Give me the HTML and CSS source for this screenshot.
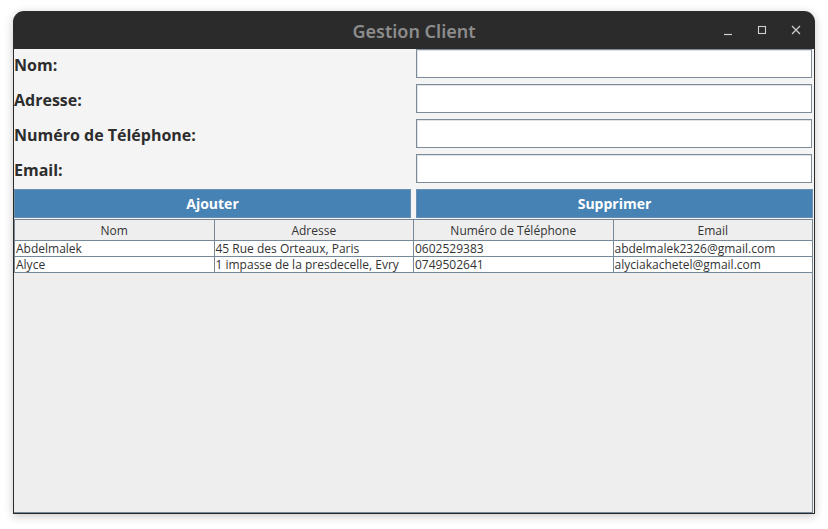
FILE: index.html
```html
<!DOCTYPE html>
<html lang="fr">
<head>
<meta charset="utf-8">
<title>Gestion Client</title>
<link rel="stylesheet" href="styles.css">
</head>
<body>
<div class="window">
  <div class="titlebar">
    <div class="title">Gestion Client</div>
    <div class="controls">
      <svg class="ctl" width="12" height="12" viewBox="0 0 12 12"><path d="M2 10.5h8" stroke="#cfcfcf" stroke-width="1.2"/></svg>
      <svg class="ctl" width="12" height="12" viewBox="0 0 12 12"><rect x="2.5" y="2.5" width="7" height="7" fill="none" stroke="#cfcfcf" stroke-width="1.1"/></svg>
      <svg class="ctl" width="12" height="12" viewBox="0 0 12 12"><path d="M2 2l8 8M10 2l-8 8" stroke="#cfcfcf" stroke-width="1.2"/></svg>
    </div>
  </div>
  <div class="content">
    <div class="form">
      <label class="lbl">Nom:</label><input class="field" type="text">
      <label class="lbl">Adresse:</label><input class="field" type="text">
      <label class="lbl">Numéro de Téléphone:</label><input class="field" type="text">
      <label class="lbl">Email:</label><input class="field" type="text">
      <button class="btn">Ajouter</button><button class="btn">Supprimer</button>
    </div>
    <div class="pane">
      <table class="grid">
        <thead>
          <tr><th>Nom</th><th>Adresse</th><th>Numéro de Téléphone</th><th>Email</th></tr>
        </thead>
        <tbody>
          <tr><td>Abdelmalek</td><td>45 Rue des Orteaux, Paris</td><td>0602529383</td><td>abdelmalek2326@gmail.com</td></tr>
          <tr><td>Alyce</td><td>1 impasse de la presdecelle, Evry</td><td>0749502641</td><td>alyciakachetel@gmail.com</td></tr>
        </tbody>
      </table>
    </div>
  </div>
</div>
</body>
</html>
```
FILE: styles.css
```css
html, body {
  margin: 0;
  padding: 0;
  background: #ffffff;
}
body {
  width: 828px;
  height: 529px;
  overflow: hidden;
}
.window {
  margin: 11px 0 0 13px;
  width: 802px;
  height: 503px;
  background: #2b2b2b;
  border-radius: 11px 11px 0 0;
  box-shadow: 0 2px 10px rgba(0,0,0,0.22);
  display: flex;
  flex-direction: column;
}
.titlebar {
  height: 38px;
  flex: none;
  display: flex;
  align-items: center;
  justify-content: center;
  position: relative;
}
.title {
  font-family: "Noto Sans", "Open Sans", sans-serif;
  font-weight: 600;
  font-size: 18px;
  color: #8c8c8c;
  margin-top: 1px;
}
.controls {
  position: absolute;
  right: 13px;
  top: 13px;
  display: flex;
  gap: 22px;
}
.ctl { display: block; }
.content {
  flex: 1;
  margin: 0 1px 1px 1px;
  background: #f4f4f4;
  display: flex;
  flex-direction: column;
}
.form {
  display: grid;
  grid-template-columns: 397px 397px;
  column-gap: 5px;
  grid-auto-rows: 29px;
  row-gap: 6px;
}
.lbl {
  font-family: "Open Sans", "Noto Sans", sans-serif;
  font-weight: 700;
  font-size: 16px;
  color: #2d2d2d;
  display: flex;
  align-items: center;
  padding-top: 2px;
}
.field {
  margin: 0;
  padding: 0;
  box-sizing: border-box;
  width: 396px;
  height: 29px;
  border: 1px solid #7d8a98;
  box-shadow: inset 1px 1px 0 #dfe3e7;
  background: #ffffff;
  outline: none;
}
.btn {
  margin: 0;
  padding: 0;
  border: 1px solid #6b8fb0;
  background: #4682b4;
  color: #ffffff;
  font-family: "Open Sans", "Noto Sans", sans-serif;
  font-weight: 700;
  font-size: 14px;
  height: 29px;
}
.pane {
  flex: 1;
  margin-top: 1px;
  width: 799px;
  background: #eeeeee;
  border-bottom: 1px solid #778899;
  border-right: 1px solid #778899;
  box-sizing: border-box;
}
.grid {
  border-collapse: collapse;
  width: 799px;
  table-layout: fixed;
  font-family: "Open Sans", "Noto Sans", sans-serif;
  font-size: 12px;
  color: #333333;
}
.grid th {
  background: #eeeeee;
  font-weight: 400;
  height: 20px;
  padding: 0;
  border: 1px solid #778899;
  text-align: center;
}
.grid td {
  background: #ffffff;
  height: 15px;
  line-height: 14px;
  padding: 0 0 0 1px;
  border: 1px solid #778899;
  white-space: nowrap;
  overflow: hidden;
}
```
